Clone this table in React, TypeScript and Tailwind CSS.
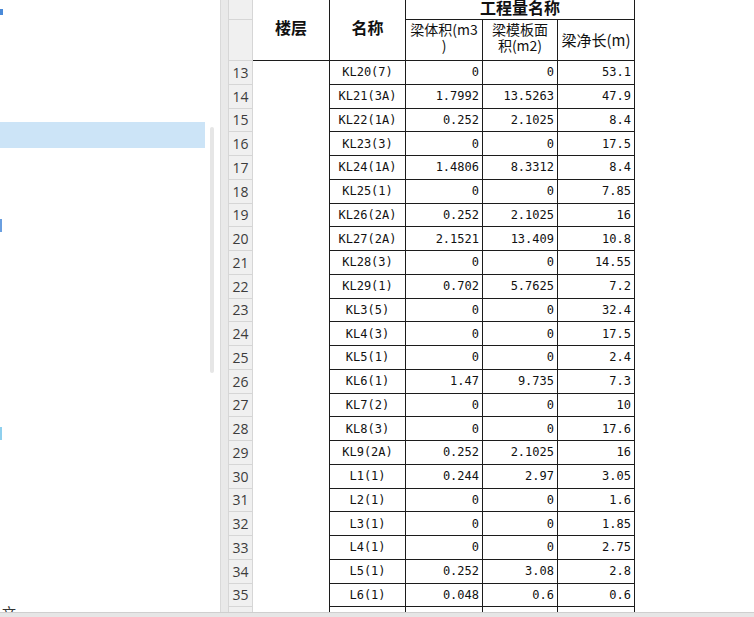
import React from 'react';

type Row = [number, string, string, string, string];

const rows: Row[] = [
  [13, 'KL20(7)', '0', '0', '53.1'],
  [14, 'KL21(3A)', '1.7992', '13.5263', '47.9'],
  [15, 'KL22(1A)', '0.252', '2.1025', '8.4'],
  [16, 'KL23(3)', '0', '0', '17.5'],
  [17, 'KL24(1A)', '1.4806', '8.3312', '8.4'],
  [18, 'KL25(1)', '0', '0', '7.85'],
  [19, 'KL26(2A)', '0.252', '2.1025', '16'],
  [20, 'KL27(2A)', '2.1521', '13.409', '10.8'],
  [21, 'KL28(3)', '0', '0', '14.55'],
  [22, 'KL29(1)', '0.702', '5.7625', '7.2'],
  [23, 'KL3(5)', '0', '0', '32.4'],
  [24, 'KL4(3)', '0', '0', '17.5'],
  [25, 'KL5(1)', '0', '0', '2.4'],
  [26, 'KL6(1)', '1.47', '9.735', '7.3'],
  [27, 'KL7(2)', '0', '0', '10'],
  [28, 'KL8(3)', '0', '0', '17.6'],
  [29, 'KL9(2A)', '0.252', '2.1025', '16'],
  [30, 'L1(1)', '0.244', '2.97', '3.05'],
  [31, 'L2(1)', '0', '0', '1.6'],
  [32, 'L3(1)', '0', '0', '1.85'],
  [33, 'L4(1)', '0', '0', '2.75'],
  [34, 'L5(1)', '0.252', '3.08', '2.8'],
  [35, 'L6(1)', '0.048', '0.6', '0.6'],
  [36, 'L7(1)', '0', '0', '7.4'],
];

const cjk = "font-['Noto_Sans_CJK_SC',sans-serif]";
const mono = "font-['DejaVu_Sans_Mono','Noto_Sans_CJK_SC',monospace]";

function LeftPanel() {
  return (
    <div className="flex w-[220px] shrink-0 bg-white">
      <div className="w-[205px]">
        <div className="h-[9px]" />
        <div className="h-[6px] w-[3px] bg-[#4a8ad8]" />
        <div className="h-[107px]" />
        {/* selected tree row */}
        <div className="h-[26px] bg-[#cce4f7]" />
        <div className="h-[71px]" />
        <div className="h-[13px] w-[2px] bg-[#6a9fe0]" />
        <div className="h-[195px]" />
        <div className="h-[13px] w-[2px] bg-[#8fd0ee]" />
        <div className="h-[164px]" />
        <div className={`${cjk} pl-[2px] text-[14px] leading-[16px] text-[#333]`}>文</div>
      </div>
      <div className="w-[15px] pt-[127px] pl-[5px]">
        <div className="h-[246px] w-[4px] rounded-full bg-[#e6e6e6]" />
      </div>
    </div>
  );
}

function Header() {
  return (
    <div className="flex h-[67px]">
      <div className="flex w-[25px] flex-col border-l border-r border-[#d6d6d6] bg-[#f0f0f0]">
        <div className="h-[26px] border-b border-[#d6d6d6]" />
        <div className="h-[41px] border-b border-[#d6d6d6]" />
      </div>
      <div className={`${cjk} flex w-[77px] items-center justify-center border-b border-r border-[#1c1c1c] text-[16px] font-bold text-[#111]`}>
        楼层
      </div>
      <div className={`${cjk} flex w-[76px] items-center justify-center border-b border-r border-[#1c1c1c] text-[16px] font-bold text-[#111]`}>
        名称
      </div>
      <div className="flex w-[229px] flex-col">
        <div className={`${cjk} flex h-[26px] items-center justify-center border-b border-r border-[#1c1c1c] text-[16px] font-bold text-[#111]`}>
          工程量名称
        </div>
        <div className={`${cjk} flex h-[41px] text-[14px] leading-[16px] text-[#111]`}>
          <div className="w-[77px] whitespace-nowrap border-b border-r border-[#1c1c1c] pt-[1px] text-center">
            梁体积(m3
            <br />)
          </div>
          <div className="w-[75px] whitespace-nowrap border-b border-r border-[#1c1c1c] pt-[1px] text-center">
            梁模板面
            <br />
            积(m2)
          </div>
          <div className="flex w-[77px] items-center justify-center whitespace-nowrap border-b border-r border-[#1c1c1c] text-[15px]">
            梁净长(m)
          </div>
        </div>
      </div>
    </div>
  );
}

function DataRow({ row }: { row: Row }) {
  const [num, name, vol, area, len] = row;
  return (
    <div className="flex h-[23.75px]">
      <div className="flex w-[25px] items-center justify-center border-b border-l border-r border-[#d6d6d6] bg-[#f0f0f0] font-['Open_Sans',sans-serif] text-[14px] text-[#3c3c3c]">
        {num}
      </div>
      <div className="w-[77px] border-r border-[#1c1c1c]" />
      <div className={`${mono} flex w-[76px] items-center justify-center whitespace-nowrap border-b border-r border-[#1c1c1c] text-[12px] text-[#111]`}>
        {name}
      </div>
      <div className={`${mono} flex w-[77px] items-center justify-end border-b border-r border-[#1c1c1c] pr-[3px] text-[12px] text-[#111]`}>
        {vol}
      </div>
      <div className={`${mono} flex w-[75px] items-center justify-end border-b border-r border-[#1c1c1c] pr-[3px] text-[12px] text-[#111]`}>
        {area}
      </div>
      <div className={`${mono} flex w-[77px] items-center justify-end border-b border-r border-[#1c1c1c] pr-[3px] text-[12px] text-[#111]`}>
        {len}
      </div>
    </div>
  );
}

export default function App() {
  return (
    <div className="flex h-[617px] w-[754px] flex-col overflow-hidden bg-white">
      <div className="flex h-[612px] overflow-hidden">
        <LeftPanel />
        <div className="w-[8px] shrink-0 border-l border-[#d9d9d9] bg-[#e9e9e9]" />
        <div className="flex-1 overflow-hidden bg-white">
          {/* grid scrolled a few pixels: header top is above the view */}
          <div className="-mt-[6px]">
            <Header />
            {rows.map((r) => (
              <DataRow key={r[0]} row={r} />
            ))}
          </div>
        </div>
      </div>
      <div className="h-[5px] border-t border-[#cfcfcf] bg-[#e6e6e6]" />
    </div>
  );
}
